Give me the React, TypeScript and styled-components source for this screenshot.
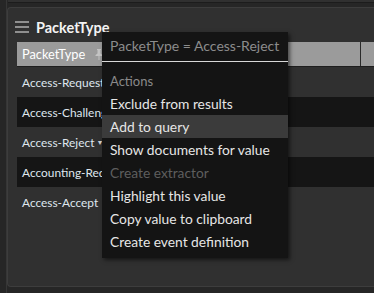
import React from 'react';
import styled, { createGlobalStyle } from 'styled-components';

const GlobalStyle = createGlobalStyle`
  html, body {
    margin: 0;
    padding: 0;
    background: #262626;
    font-family: Lato, "Open Sans", sans-serif;
    overflow: hidden;
  }
  * { box-sizing: border-box; }
`;

const Page = styled.div`
  position: relative;
  width: 374px;
  height: 293px;
  padding-left: 6px;
`;

const Shell = styled.div`
  height: 100%;
  border-left: 1px solid #363636;
  display: flex;
  flex-direction: column;
`;

const TopStrip = styled.div`
  height: 3px;
  margin-left: 1px;
  background: #303030;
  border-bottom: 1px solid #1c1c1c;
`;

const Panel = styled.section`
  margin: 4px 0 6px 0;
  height: 280px;
  background: #303030;
  border: 1px solid #3d3d3d;
  border-right: none;
  border-radius: 4px 0 0 4px;
  display: flex;
  flex-direction: column;
`;

const PanelHeader = styled.div`
  display: flex;
  align-items: center;
  gap: 7px;
  height: 34px;
  padding: 4px 0 0 7px;
`;

const Title = styled.h2`
  margin: 0;
  font-size: 14.5px;
  font-weight: 700;
  color: #f4f4f4;
`;

const Table = styled.div`
  margin-left: 9px;
  display: flex;
  flex-direction: column;
`;

const HeadRow = styled.div`
  display: flex;
  height: 25px;
  border-bottom: 1px solid #1e1e1e;
`;

const HeadCell = styled.div<{ $w?: number }>`
  ${p => (p.$w ? `width: ${p.$w}px;` : 'flex: 1;')}
  background: #9b9b9b;
  color: #ffffff;
  font-size: 12.8px;
  display: flex;
  align-items: center;
  padding-left: 5px;
  & + & { border-left: 1px solid #2a2a2a; }
`;

const HeadLabel = styled.span`
  width: 73px;
`;

const Row = styled.div<{ $dark?: boolean }>`
  height: 30px;
  display: flex;
  align-items: center;
  gap: 2px;
  padding-left: 5px;
  font-size: 11.9px;
  color: #dfe6ee;
  white-space: nowrap;
  background: ${p => (p.$dark ? '#151515' : 'transparent')};
`;

const Caret = styled.span`
  font-size: 7px;
  color: #cfcfcf;
`;

const Menu = styled.div`
  position: absolute;
  left: 102px;
  top: 32px;
  width: 186px;
  padding-bottom: 5px;
  background: #141414;
  box-shadow: 2px 2px 4px rgba(0, 0, 0, 0.55);
  font-size: 13.8px;
`;

const MenuTitle = styled.div`
  height: 30px;
  line-height: 28px;
  padding: 0 8px;
  font-size: 14px;
  color: #8c8c8c;
  border-bottom: 1px solid #d8d8d8;
  white-space: nowrap;
`;

const MenuSection = styled.div`
  margin-top: 8px;
  height: 22px;
  line-height: 22px;
  padding: 0 8px;
  font-size: 13px;
  color: #8a8a8a;
`;

const MenuItem = styled.div<{ $active?: boolean; $disabled?: boolean }>`
  height: 23px;
  line-height: 23px;
  padding: 0 8px;
  white-space: nowrap;
  color: ${p => (p.$disabled ? '#5e5e5e' : '#e6e6e6')};
  background: ${p => (p.$active ? '#3b3b3b' : 'transparent')};
`;

const MenuIcon = () => (
  <svg width="14" height="12" viewBox="0 0 14 12">
    <rect x="0" y="0" width="14" height="2" fill="#8f8f8f" />
    <rect x="0" y="5" width="14" height="2" fill="#8f8f8f" />
    <rect x="0" y="10" width="14" height="2" fill="#8f8f8f" />
  </svg>
);

const PinIcon = () => (
  <svg width="8" height="11" viewBox="0 0 8 11">
    <path d="M2 0h4v1H5.5v3.5L7.5 6v1H4.5v4h-1V7H.5V6l2-1.5V1H2z" fill="#c4c4c4" />
  </svg>
);

const rows = [
  { label: 'Access-Request' },
  { label: 'Access-Challenge', dark: true },
  { label: 'Access-Reject', caret: true },
  { label: 'Accounting-Request', dark: true },
  { label: 'Access-Accept' },
];

const items = [
  { label: 'Exclude from results' },
  { label: 'Add to query', active: true },
  { label: 'Show documents for value' },
  { label: 'Create extractor', disabled: true },
  { label: 'Highlight this value' },
  { label: 'Copy value to clipboard' },
  { label: 'Create event definition' },
];

export default function App() {
  return (
    <Page>
      <GlobalStyle />
      <Shell>
        <TopStrip />
        <Panel>
          <PanelHeader>
            <MenuIcon />
            <Title>PacketType</Title>
          </PanelHeader>
          <Table>
            <HeadRow>
              <HeadCell $w={343}>
                <HeadLabel>PacketType</HeadLabel>
                <PinIcon />
              </HeadCell>
              <HeadCell />
            </HeadRow>
            {rows.map(r => (
              <Row key={r.label} $dark={r.dark}>
                {r.label}
                {r.caret && <Caret>▼</Caret>}
              </Row>
            ))}
          </Table>
        </Panel>
      </Shell>
      <Menu>
        <MenuTitle>PacketType = Access-Reject</MenuTitle>
        <MenuSection>Actions</MenuSection>
        {items.map(i => (
          <MenuItem key={i.label} $active={i.active} $disabled={i.disabled}>
            {i.label}
          </MenuItem>
        ))}
      </Menu>
    </Page>
  );
}
